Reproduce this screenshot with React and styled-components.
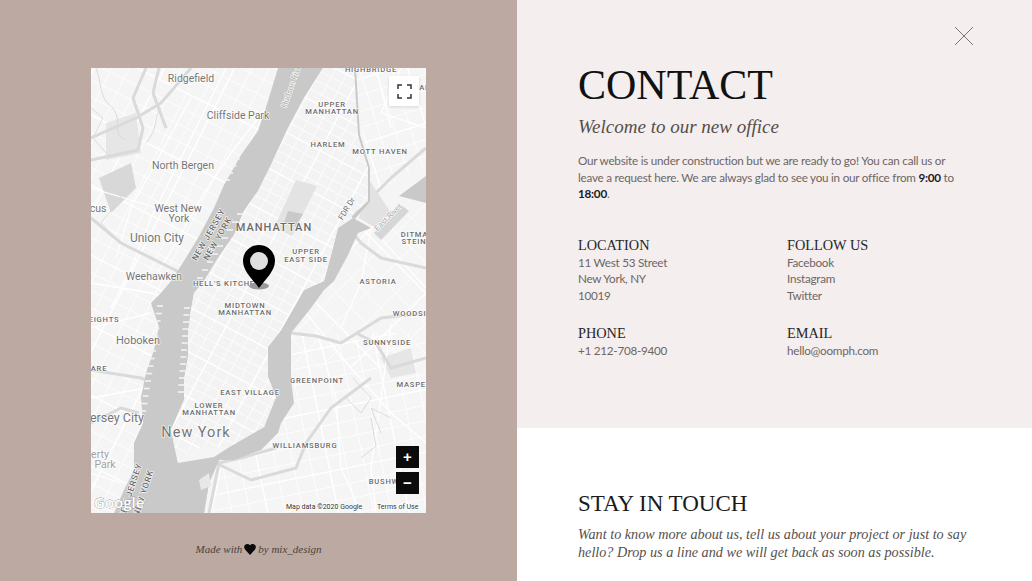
import React from 'react'
import styled, { createGlobalStyle } from 'styled-components'

const GlobalStyle = createGlobalStyle`
  html, body { margin: 0; padding: 0; height: 100%; overflow: hidden; }
  body { font-family: 'Lato', 'Open Sans', sans-serif; }
  * { box-sizing: border-box; }
`

const Page = styled.div`
  display: flex;
  width: 1032px;
  height: 581px;
  overflow: hidden;
`
const LeftPane = styled.section`
  width: 517px;
  background: #bcaaa2;
  padding-top: 68px;
  display: flex;
  flex-direction: column;
  align-items: center;
`
const MapBox = styled.div`
  position: relative;
  width: 335px;
  height: 445px;
  background: #f5f5f5;
  overflow: hidden;
  svg { display: block; }
`
const FullscreenButton = styled.button`
  position: absolute;
  top: 8px;
  right: 7px;
  width: 30px;
  height: 30px;
  padding: 0;
  border: none;
  background: #fff;
  box-shadow: 0 1px 3px rgba(0, 0, 0, 0.12);
  display: flex;
  align-items: center;
  justify-content: center;
`
const ZoomControls = styled.div`
  position: absolute;
  right: 7px;
  bottom: 19px;
  display: flex;
  flex-direction: column;
  gap: 4px;
`
const ZoomButton = styled.button`
  width: 23px;
  height: 22px;
  padding: 0;
  border: none;
  background: #0b0b0b;
  color: #fff;
  font: 700 15px/22px 'Liberation Sans', sans-serif;
`
const Credit = styled.p`
  margin: 29px 0 0;
  font: italic 11px/14px 'Liberation Serif', serif;
  color: #4a403c;
  display: flex;
  align-items: center;
  gap: 2px;
`
const RightPane = styled.section`
  position: relative;
  width: 515px;
  display: flex;
  flex-direction: column;
`
const CloseButton = styled.button`
  position: absolute;
  top: 26px;
  right: 58px;
  width: 20px;
  height: 20px;
  padding: 0;
  border: none;
  background: none;
  svg { display: block; }
`
const ContactPanel = styled.div`
  height: 428px;
  background: #f4eeee;
  padding: 62px 61px 0;
`
const Title = styled.h1`
  margin: 0;
  font: 400 42px/46px 'Liberation Serif', serif;
  color: #111;
`
const Subtitle = styled.h2`
  margin: 6px 0 0;
  font: italic 400 19px/26px 'Liberation Serif', serif;
  color: #544e4c;
`
const Intro = styled.p`
  margin: 12px 0 0;
  width: 385px;
  font-size: 11.7px;
  letter-spacing: -0.24px;
  line-height: 16.5px;
  color: #6e6664;
  b { font-weight: 700; color: #1c1c1c; }
`
const InfoGrid = styled.div`
  display: grid;
  grid-template-columns: 209px 1fr;
  row-gap: 21px;
  margin-top: 34px;
`
const InfoBlock = styled.div`
  font-size: 11.7px;
  letter-spacing: -0.26px;
  line-height: 16.5px;
  color: #6e6664;
`
const InfoTitle = styled.h3`
  margin: 0;
  font: 400 14.3px/18px 'Liberation Serif', serif;
  letter-spacing: 0;
  color: #262626;
`
const Line = styled.div``
const TouchPanel = styled.div`
  flex: 1;
  background: #fff;
  padding: 61px 61px 0;
`
const TouchTitle = styled.h2`
  margin: 0;
  font: 400 23px/30px 'Liberation Serif', serif;
  color: #1a1a1a;
`
const TouchText = styled.p`
  margin: 7px 0 0;
  font: italic 400 14.2px/17.5px 'Liberation Serif', serif;
  color: #55504e;
`

const WATER = '#c9c9c9'
const HWY = '#dadada'
const PARK = '#e6e6e6'

const hudson = 'M187 0L177 33L167 63L150 87L133 117L123 140L107 170L93 193L80 213L70 225L60 235L68 259L63 282L55 305L50 329L52 355L43 375L43 402L33 422L23 445L113 445L118 415L128 392L123 389L87 395L80 362L93 332L93 312L97 289L97 265L100 242L103 225L113 213L127 190L143 167L153 143L167 123L180 97L197 60L213 30L232 0Z'
const eastRiver = 'M247 160L262 150L280 160L267 165L257 187L243 213L233 222L220 240L200 265L200 312L203 335L190 355L187 365L170 382L143 392L128 392L118 415L113 445L100 445L123 389L140 378L173 359L185 329L177 309L177 279L190 262L213 222L233 213L240 187Z'
const manhattan = '232,0 213,30 197,60 180,97 167,123 153,143 143,167 127,190 113,213 103,225 100,242 97,265 97,289 93,312 93,332 80,362 87,395 97,382 115,380 140,378 173,359 185,329 177,309 177,279 190,262 213,222 233,213 240,187 247,160 277,133 277,100 267,67 263,0'
const jersey = '0,0 187,0 167,63 133,117 107,170 80,213 60,235 68,259 55,305 52,355 43,402 23,445 0,445'
const brooklyn = '122,445 128,392 170,382 190,355 203,335 200,265 335,265 335,445'
const queens = '243,213 267,165 335,130 335,300 200,300 200,265'
const bronx = '263,0 335,0 335,100 277,125 277,100'

const highways = [
  'M55 0L42 30L52 60L47 82L0 92',
  'M0 70L45 50L70 35L100 0',
  'M0 150L30 175L90 205L130 240',
  'M68 0L62 25L75 60',
  'M335 80L300 110L277 133',
  'M335 200L290 190L270 175L262 165',
  'M0 302L50 310L100 330',
  'M335 245L290 250L250 275L225 268L200 265',
  'M335 290L300 300L285 275L265 265',
  'M280 310L240 340L215 375L205 400L160 412L125 395',
  'M185 380L150 390L128 395L118 445',
  'M87 395L105 445',
  'M0 355L30 340L48 345',
]
const creeks = [
  'M5 0C12 20 8 30 22 40C32 55 20 65 34 72',
  'M70 40C62 50 68 60 55 75',
  'M0 40L12 50L2 70L15 85',
  'M20 105L30 130L10 155L24 170',
  'M255 330L270 345L280 330L262 310',
  'M270 390L285 378L280 350',
  'M300 350L280 340L290 365',
]
const roads = [
  'M135 0L105 60L80 110L60 150L40 200L20 240',
  'M100 30L70 85L40 140L25 190',
  'M175 40L140 85L110 130L85 175L60 215',
  'M0 215L60 225L95 235',
  'M0 120L50 135L95 150',
  'M60 245L0 260',
  'M55 320L0 330',
  'M0 405L30 415',
  'M215 245L260 300L300 345L335 375',
  'M225 262L245 330L250 400L270 445',
  'M300 255L290 330L280 400L285 445',
  'M285 165L335 220',
  'M280 160L270 215L250 260',
  'M310 0L290 45L335 60',
  'M285 0L300 60',
  'M130 400L120 445',
]

// parallel streets for a district, on an axis and a cross axis
const streets = (x, y, ax, ay, bx, by, n) => {
  const out = []
  for (let i = -n; i <= n; i++) {
    const px = x + bx * i
    const py = y + by * i
    out.push(`M${px - ax * 400} ${py - ay * 400}L${px + ax * 400} ${py + ay * 400}`)
  }
  return out
}
const islandGrid = [
  ...streets(168, 197, 0.47, -0.88, 11, 5.9, 16),
  ...streets(168, 197, 0.88, 0.47, -4.7, 8.8, 32),
]
const jerseyGrid = [
  ...streets(60, 200, 0.45, -0.89, 14, 7, 9),
  ...streets(60, 200, 0.89, 0.45, -7, 14, 16),
]
const brooklynGrid = [
  ...streets(250, 370, 0.2, 0.98, 17, -3.5, 9),
  ...streets(250, 370, 0.98, -0.2, 3, 15, 7),
]
const queensGrid = [
  ...streets(290, 210, 0.7, 0.71, 15, -15, 7),
  ...streets(290, 210, 0.71, -0.7, 15, 15, 7),
]
const bronxGrid = [
  ...streets(300, 50, 0.3, 0.95, 15, -4, 6),
  ...streets(300, 50, 0.95, -0.3, 4, 15, 6),
]

// finger piers sticking out from the Hudson banks
const piers = []
for (let i = 0; i < 15; i++) piers.push(`M${66 - i * 1.2} ${238 + i * 7.5}h6`)
for (let i = 0; i < 13; i++) piers.push(`M${99 - i * 0.5} ${240 + i * 7}h-6`)
for (let i = 0; i < 9; i++) piers.push(`M${112 + i * 5} ${210 - i * 8}h-6`)
for (let i = 0; i < 6; i++) piers.push(`M${133 + i * 3.2} ${112 - i * 7}h6`)

const small = { size: 7.6, weight: 500, spacing: 0.8, fill: '#6b6b6b' }
const city = { size: 10.5, weight: 400, spacing: 0, fill: '#757575' }

const labels = [
  { t: 'Ridgefield', x: 100, y: 14, ...city },
  { t: 'Cliffside Park', x: 147, y: 51, ...city },
  { t: 'HIGHBRIDGE', x: 280, y: 4, ...small },
  { t: 'SAINT MARY', x: 349, y: 22, ...small },
  { t: 'UPPER', x: 241, y: 39, ...small },
  { t: 'MANHATTAN', x: 241, y: 46, ...small },
  { t: 'HARLEM', x: 237, y: 79, ...small },
  { t: 'MOTT HAVEN', x: 289, y: 86, ...small },
  { t: 'North Bergen', x: 92, y: 101, ...city },
  { t: 'West New', x: 87, y: 144, ...city },
  { t: 'York', x: 88, y: 154, ...city },
  { t: 'cus', x: 7, y: 144, ...city },
  { t: 'Union City', x: 66, y: 174, ...city, size: 12 },
  { t: 'MANHATTAN', x: 183, y: 163, ...small, size: 11, spacing: 1 },
  { t: 'UPPER', x: 215, y: 186, ...small },
  { t: 'EAST SIDE', x: 215, y: 194, ...small },
  { t: 'ASTORIA', x: 287, y: 216, ...small },
  { t: 'DITMARS', x: 329, y: 169, ...small },
  { t: 'STEINWAY', x: 332, y: 176, ...small },
  { t: 'Weehawken', x: 63, y: 212, ...city },
  { t: "HELL'S KITCHEN", x: 136, y: 218, ...small },
  { t: 'MIDTOWN', x: 154, y: 240, ...small },
  { t: 'MANHATTAN', x: 154, y: 247, ...small },
  { t: 'EIGHTS', x: 13, y: 254, ...small },
  { t: 'WOODSIDE', x: 324, y: 248, ...small },
  { t: 'SUNNYSIDE', x: 296, y: 277, ...small },
  { t: 'Hoboken', x: 47, y: 276, ...city, size: 11 },
  { t: 'ARE', x: 8, y: 303, ...small },
  { t: 'GREENPOINT', x: 226, y: 315, ...small },
  { t: 'MASPETH', x: 326, y: 319, ...small },
  { t: 'EAST VILLAGE', x: 159, y: 327, ...small },
  { t: 'LOWER', x: 118, y: 340, ...small },
  { t: 'MANHATTAN', x: 118, y: 347, ...small },
  { t: 'ersey City', x: 26, y: 354, ...city, size: 12.5 },
  { t: 'New York', x: 105, y: 369, ...city, size: 14.5, spacing: 1 },
  { t: 'WILLIAMSBURG', x: 214, y: 380, ...small },
  { t: 'erty', x: 9, y: 390, ...city, fill: '#a0a0a0' },
  { t: 'Park', x: 14, y: 400, ...city, fill: '#a0a0a0' },
  { t: 'BUSHWICK', x: 300, y: 416, ...small },
  { t: 'NEW JERSEY', x: 120, y: 168, ...small, size: 8.5, rotate: -60 },
  { t: 'NEW YORK', x: 129, y: 172, ...small, size: 8.5, rotate: -60 },
  { t: 'NEW JERSEY', x: 42, y: 424, ...small, size: 8.5, rotate: -72 },
  { t: 'NEW YORK', x: 55, y: 426, ...small, size: 8.5, rotate: -72 },
  { t: 'Hudson River', x: 203, y: 18, ...city, size: 8, fill: '#a8a8a8', rotate: -70 },
  { t: 'FDR Dr', x: 258, y: 142, ...city, size: 8, rotate: -58 },
  { t: 'East River', x: 299, y: 151, ...city, size: 8, fill: '#a8a8a8', rotate: -45 },
]

const District = ({ id, points, lines, fill }) => (
  <>
    <clipPath id={id}><polygon points={points} /></clipPath>
    {fill && <polygon points={points} fill={fill} />}
    <g clipPath={`url(#${id})`} fill="none" stroke="#fff" strokeWidth="0.8">
      {lines.map((d, i) => <path key={i} d={d} strokeWidth={i % 4 === 0 ? 1.4 : 0.8} />)}
    </g>
  </>
)

const MapDrawing = () => (
  <svg width="335" height="445" viewBox="0 0 335 445">
    <rect width="335" height="445" fill="#f5f5f5" />
    <District id="jersey" points={jersey} lines={jerseyGrid} />
    <District id="brooklyn" points={brooklyn} lines={brooklynGrid} />
    <District id="queens" points={queens} lines={queensGrid} />
    <District id="bronx" points={bronx} lines={bronxGrid} />
    <path d="M15 55L45 45L50 85L15 92Z" fill={PARK} />
    <path d="M8 110L40 95L45 120L20 145Z" fill="#d8d8d8" />
    <path d="M105 300L120 285L130 310Z" fill={PARK} />
    <path d="M290 290L320 280L325 305L300 310Z" fill={PARK} />
    <g fill="none" stroke="#fff" strokeWidth="1.3">
      {roads.map(d => <path key={d} d={d} />)}
    </g>
    <g fill="none" stroke="#d4d4d4" strokeWidth="0.8">
      {creeks.map(d => <path key={d} d={d} />)}
    </g>
    <g fill="none" stroke={HWY} strokeWidth="3" strokeLinejoin="round">
      {highways.map(d => <path key={d} d={d} />)}
    </g>
    <path d={hudson} fill={WATER} />
    <path d={eastRiver} fill={WATER} />
    <path d="M335 108L308 128L335 135Z" fill={WATER} />
    <path d="M283 165L310 137L318 143L290 172Z" fill="#d6d6d6" />
    <path d="M277 110L300 145L285 160L268 150Z" fill="#e2e2e2" />
    <path d="M263 0L267 67L277 100L277 133L262 150" fill="none" stroke={WATER} strokeWidth="4" />
    <g fill="none" stroke="#f3f3f3" strokeWidth="1.6">
      {piers.map(d => <path key={d} d={d} />)}
    </g>
    <District id="island" points={manhattan} lines={islandGrid} fill="#f3f3f3" />
    <g clipPath="url(#island)">
      <path d="M205 112L226 118L201 168L183 160Z" fill="#e3e3e3" />
      <path d="M197 143L212 146L205 158L193 155Z" fill={WATER} />
    </g>
    <path d="M108 412L118 405L120 418L110 422Z" fill="#e8e8e8" />
    <g fontFamily="Roboto, 'Liberation Sans', sans-serif" stroke="#fff" strokeWidth="1.2" paintOrder="stroke" strokeLinejoin="round">
      {labels.map(l => (
        <text
          key={`${l.t}${l.x}${l.y}`}
          x={l.x}
          y={l.y}
          textAnchor="middle"
          fontSize={l.size}
          fontWeight={l.weight}
          letterSpacing={l.spacing}
          fill={l.fill}
          transform={l.rotate ? `rotate(${l.rotate} ${l.x} ${l.y})` : undefined}
        >
          {l.t}
        </text>
      ))}
    </g>
    <ellipse cx="168" cy="218" rx="10" ry="3.5" fill="#9a9a9a" />
    <path d="M168 177C159 177 152 184 152 193C152 203 162 212 168 220C174 212 184 203 184 193C184 184 177 177 168 177Z" fill="#000" />
    <circle cx="168" cy="193" r="9" fill="#e0e0e0" />
    <text x="3" y="440" fontFamily="'Open Sans', sans-serif" fontWeight="600" fontSize="15" fill="#fff" stroke="#9a9a9a" strokeWidth="0.8" paintOrder="stroke">Google</text>
    <g fontFamily="Roboto, 'Liberation Sans', sans-serif" fontSize="7" fill="#333" stroke="#fff" strokeWidth="1.2" paintOrder="stroke">
      <text x="195" y="441">Map data ©2020 Google</text>
      <text x="286" y="441">Terms of Use</text>
    </g>
  </svg>
)

const App = () => (
  <Page>
    <GlobalStyle />
    <LeftPane>
      <MapBox>
        <MapDrawing />
        <FullscreenButton aria-label="Fullscreen">
          <svg width="15" height="15" viewBox="0 0 15 15" fill="none" stroke="#333" strokeWidth="1.5">
            <path d="M1 5V1H5M10 1H14V5M14 10V14H10M5 14H1V10" />
          </svg>
        </FullscreenButton>
        <ZoomControls>
          <ZoomButton>+</ZoomButton>
          <ZoomButton>−</ZoomButton>
        </ZoomControls>
      </MapBox>
      <Credit>
        Made with
        <svg width="12" height="11" viewBox="0 0 24 22" fill="#0a0a0a">
          <path d="M12 22L2 11C-2 5 2 0 7 0C9 0 11 1 12 3C13 1 15 0 17 0C22 0 26 5 22 11Z" />
        </svg>
        by mix_design
      </Credit>
    </LeftPane>
    <RightPane>
      <CloseButton aria-label="Close">
        <svg width="20" height="20" viewBox="0 0 20 20" stroke="#777" strokeWidth="1">
          <path d="M1 1L19 19M19 1L1 19" />
        </svg>
      </CloseButton>
      <ContactPanel>
        <Title>CONTACT</Title>
        <Subtitle>Welcome to our new office</Subtitle>
        <Intro>
          Our website is under construction but we are ready to go! You can call us or leave a request here. We are always glad to see you in our office from <b>9:00</b> to <b>18:00</b>.
        </Intro>
        <InfoGrid>
          <InfoBlock>
            <InfoTitle>LOCATION</InfoTitle>
            <Line>11 West 53 Street</Line>
            <Line>New York, NY</Line>
            <Line>10019</Line>
          </InfoBlock>
          <InfoBlock>
            <InfoTitle>FOLLOW US</InfoTitle>
            <Line>Facebook</Line>
            <Line>Instagram</Line>
            <Line>Twitter</Line>
          </InfoBlock>
          <InfoBlock>
            <InfoTitle>PHONE</InfoTitle>
            <Line>+1 212-708-9400</Line>
          </InfoBlock>
          <InfoBlock>
            <InfoTitle>EMAIL</InfoTitle>
            <Line>hello@oomph.com</Line>
          </InfoBlock>
        </InfoGrid>
      </ContactPanel>
      <TouchPanel>
        <TouchTitle>STAY IN TOUCH</TouchTitle>
        <TouchText>
          Want to know more about us, tell us about your project or just to say hello? Drop us a line and we will get back as soon as possible.
        </TouchText>
      </TouchPanel>
    </RightPane>
  </Page>
)

export default App
